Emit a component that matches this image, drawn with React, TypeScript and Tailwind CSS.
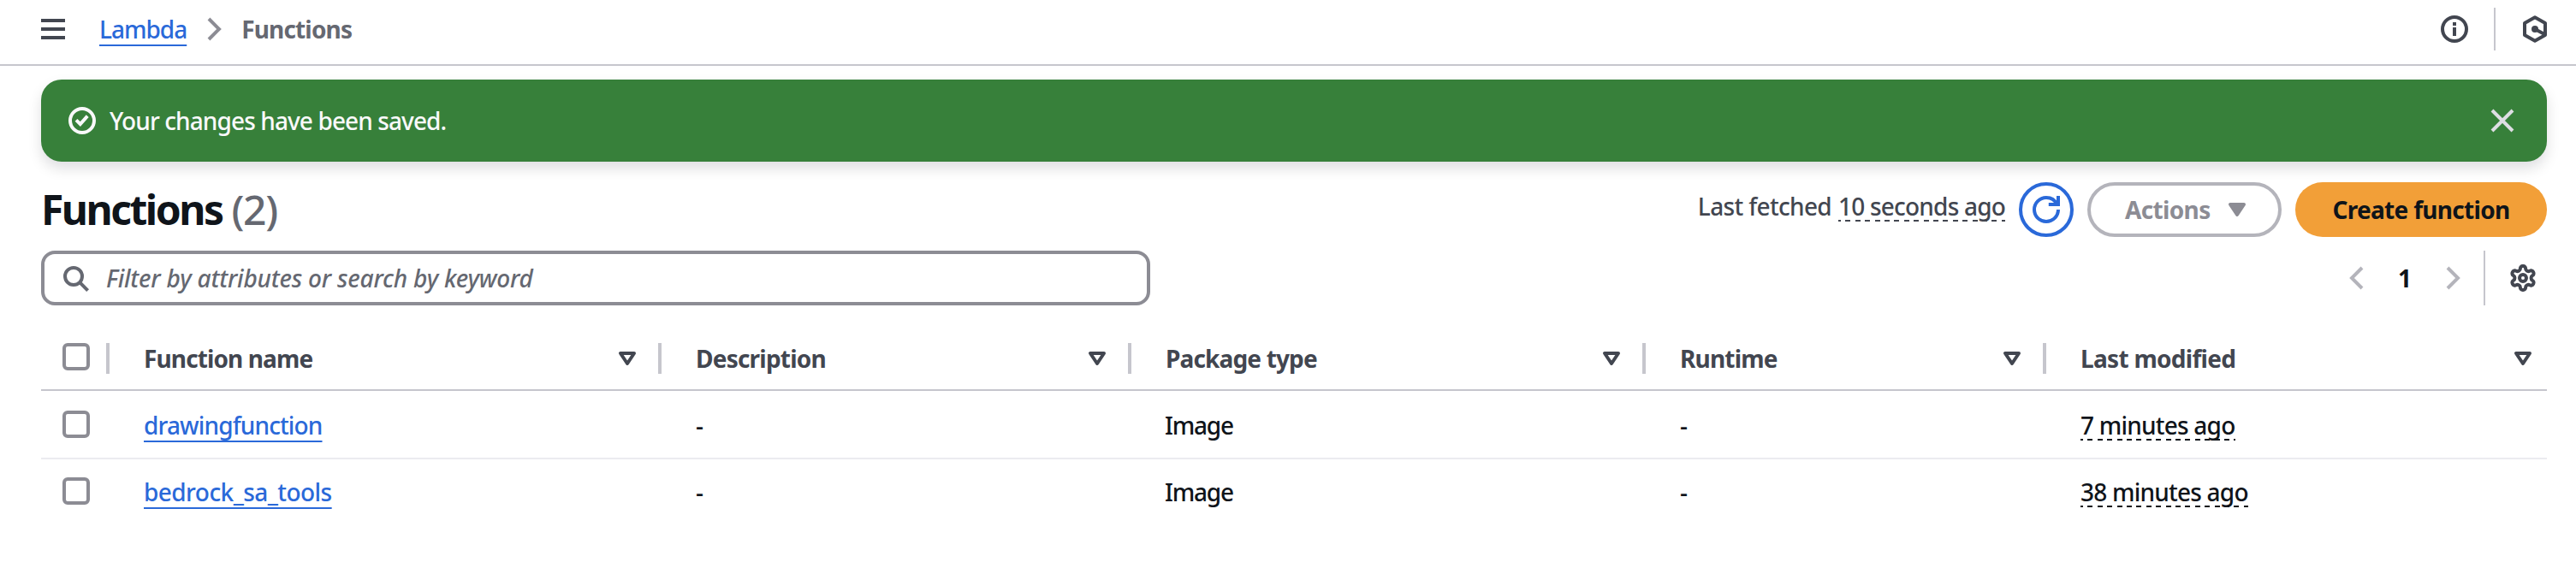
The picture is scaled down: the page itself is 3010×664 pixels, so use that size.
import type { ReactNode } from "react";

function Icon({ children, className = "" }: { children: ReactNode; className?: string }) {
  return (
    <svg
      viewBox="0 0 16 16"
      className={`size-8 shrink-0 ${className}`}
      fill="none"
      stroke="currentColor"
      strokeWidth={2}
      aria-hidden="true"
    >
      {children}
    </svg>
  );
}

const ChevronRight = ({ className }: { className?: string }) => (
  <Icon className={className}>
    <path d="M5 2l6 6-6 6" />
  </Icon>
);

const SortIcon = () => (
  <Icon className="text-[#424650]">
    <path d="M4 5h8l-4 6z" strokeLinejoin="round" />
  </Icon>
);

function GearIcon() {
  return (
    <svg
      viewBox="0.55 0.55 22.9 22.9"
      className="size-8 shrink-0 text-[#424650]"
      fill="none"
      stroke="currentColor"
      strokeWidth={2.86}
      aria-hidden="true"
    >
      <path d="M12.22 2h-.44a2 2 0 0 0-2 2v.18a2 2 0 0 1-1 1.73l-.43.25a2 2 0 0 1-2 0l-.15-.08a2 2 0 0 0-2.73.73l-.22.38a2 2 0 0 0 .73 2.73l.15.1a2 2 0 0 1 1 1.72v.51a2 2 0 0 1-1 1.74l-.15.09a2 2 0 0 0-.73 2.73l.22.38a2 2 0 0 0 2.73.73l.15-.08a2 2 0 0 1 2 0l.43.25a2 2 0 0 1 1 1.73V20a2 2 0 0 0 2 2h.44a2 2 0 0 0 2-2v-.18a2 2 0 0 1 1-1.73l.43-.25a2 2 0 0 1 2 0l.15.08a2 2 0 0 0 2.73-.73l.22-.39a2 2 0 0 0-.73-2.73l-.15-.08a2 2 0 0 1-1-1.74v-.5a2 2 0 0 1 1-1.74l.15-.09a2 2 0 0 0 .73-2.73l-.22-.38a2 2 0 0 0-2.73-.73l-.15.08a2 2 0 0 1-2 0l-.43-.25a2 2 0 0 1-1-1.73V4a2 2 0 0 0-2-2z" />
      <circle cx="12" cy="12" r="2.85" />
    </svg>
  );
}

const Checkbox = () => (
  <span
    role="checkbox"
    aria-checked="false"
    className="ml-[25px] block size-8 rounded-[6px] border-4 border-[#8c8c94] bg-white"
  />
);

const link =
  "text-[#2a69d9] underline decoration-2 underline-offset-[7px] [text-decoration-skip-ink:none]";

function Ago({ children, className = "" }: { children: ReactNode; className?: string }) {
  return (
    <span
      className={`inline-block bg-[repeating-linear-gradient(90deg,currentColor_0_3px,transparent_3px_8.4px,currentColor_8.4px_11.4px)] bg-[length:100%_2px] bg-[position:0_36px] bg-no-repeat ${className}`}
    >
      {children}
    </span>
  );
}

const grid = "grid grid-cols-[80px_645px_549px_601px_468px_585px] items-center";

const columns = [
  { label: "Function name", tracking: "tracking-[-0.88px]" },
  { label: "Description", tracking: "tracking-[-0.78px]" },
  { label: "Package type", tracking: "tracking-[-0.85px]" },
  { label: "Runtime", tracking: "tracking-[-0.8px]" },
  { label: "Last modified", tracking: "tracking-[-0.7px]" },
];

const rows = [
  {
    name: "drawingfunction",
    nameTracking: "tracking-[-0.87px]",
    modified: "7 minutes ago",
    className: "h-20 border-b-2 border-[#ebebf0]",
  },
  {
    name: "bedrock_sa_tools",
    nameTracking: "tracking-[-0.56px]",
    modified: "38 minutes ago",
    className: "h-[74px]",
  },
];

export default function App() {
  return (
    <div className="min-h-[664px] w-[3010px] bg-white font-['Noto_Sans','Open_Sans',sans-serif] text-[28px] leading-[40px] font-medium whitespace-nowrap text-[#0f141a]">
      <header className="flex h-[77px] items-center justify-between border-b-2 border-[#c6c6cd] pr-8 pb-[7px] pl-[46px]">
        <nav className="flex items-center">
          <Icon className="text-[#424650]">
            <path d="M1 3h14M1 8h14M1 13h14" />
          </Icon>
          <a className={`ml-[38px] tracking-[-1px] ${link}`}>Lambda</a>
          <ChevronRight className="ml-4 text-[#8c8c94]" />
          <span className="ml-4 font-bold tracking-[-0.85px] text-[#656871]">Functions</span>
        </nav>
        <div className="flex items-center gap-[30px] text-[#424650]">
          <Icon>
            <circle cx="8" cy="8" r="7" />
            <path d="M8 4v2M8 7v5" />
          </Icon>
          <span className="h-[50px] w-[2px] bg-[#c6c6cd]" />
          <Icon>
            <path d="M8 1.15l6 3.4v6.9l-6 3.4-6-3.4v-6.9z" strokeLinejoin="round" />
            <circle cx="8" cy="8" r="2" fill="currentColor" stroke="none" />
            <path d="M8 8l5.6 3" />
          </Icon>
        </div>
      </header>

      <main className="w-[2976px] pt-4 pl-12">
        <div className="flex h-24 items-center rounded-3xl bg-[#37803a] pr-9 pl-8 text-[#f9f9fa] shadow-[0_8px_16px_rgba(0,7,22,0.13)]">
          <Icon>
            <circle cx="8" cy="8" r="7" />
            <path d="M4.5 7.7l2.4 2.3 4.2-4.7" />
          </Icon>
          <span className="ml-4 grow tracking-[-0.9px]">Your changes have been saved.</span>
          <Icon className="text-[#dedee3]">
            <path d="M2 2l12 12M14 2L2 14" />
          </Icon>
        </div>

        <div className="mt-6 flex h-16 items-center">
          <h1 className="grow text-[48px] leading-[60px] font-bold tracking-[-2.5px]">
            Functions{" "}
            <span className="ml-[1px] font-medium tracking-[-1.4px] text-[#656871]">(2)</span>
          </h1>
          <div className="mr-4 pb-2 text-[#424650]">
            <span className="mr-[8px] tracking-[-0.66px]">Last fetched</span>
            <Ago className="tracking-[-0.8px]">10 seconds ago</Ago>
          </div>
          <button className="mr-4 flex size-16 items-center justify-center rounded-full border-4 border-[#2a69d9] text-[#2a69d9]">
            <Icon>
              <path d="M15 8a7 7 0 1 1-7-7c2.9 0 5.2 1.6 6.2 4" />
              <path d="M9.4 5H15V0" />
            </Icon>
          </button>
          <button className="mr-4 flex h-16 w-[227px] items-center justify-between rounded-full border-4 border-[#b4b4bb] pr-8 pl-10 font-bold text-[#8c8c94]">
            <span className="tracking-[-0.65px]">Actions</span>
            <Icon>
              <path d="M4 5h8l-4 6z" fill="currentColor" strokeLinejoin="round" />
            </Icon>
          </button>
          <button className="h-16 w-[294px] rounded-full bg-[#f29f38] font-bold tracking-[-0.7px]">
            Create function
          </button>
        </div>

        <div className="mt-4 flex h-16 items-center justify-between">
          <div className="flex h-16 w-[1296px] items-center rounded-2xl border-4 border-[#8c8c94] pl-5 text-[#656871]">
            <Icon>
              <circle cx="7" cy="7" r="5" />
              <path d="M10.6 10.6l4.7 4.7" />
            </Icon>
            <span className="ml-5 tracking-[-0.2px] italic">
              Filter by attributes or search by keyword
            </span>
          </div>
          <div className="flex h-16 items-center pr-3">
            <ChevronRight className="rotate-180 text-[#b4b4bb]" />
            <span className="w-20 text-center font-bold">1</span>
            <ChevronRight className="text-[#b4b4bb]" />
            <span className="mr-7 ml-5 h-16 w-[2px] bg-[#c6c6cd]" />
            <GearIcon />
          </div>
        </div>

        <div className="mt-[26px]">
          <div className={`${grid} h-[74px] border-b-2 border-[#c6c6cd]`}>
            <div className="flex h-9 justify-between border-r-4 border-[#c6c6cd]">
              <Checkbox />
            </div>
            {columns.map((column, i) => {
              const last = i === columns.length - 1;
              return (
                <div
                  key={column.label}
                  className={`flex h-9 items-center justify-between pl-10 font-bold text-[#424650] ${
                    last ? "pr-3" : "border-r-4 border-[#c6c6cd] pr-5"
                  }`}
                >
                  <span className={column.tracking}>{column.label}</span>
                  <SortIcon />
                </div>
              );
            })}
          </div>
          {rows.map((row) => (
            <div key={row.name} className={`${grid} ${row.className}`}>
              <Checkbox />
              <div className="pt-[2px] pl-10">
                <a className={`${link} ${row.nameTracking}`}>{row.name}</a>
              </div>
              <div className="pt-[2px] pl-10">-</div>
              <div className="pt-[2px] pl-[39px] tracking-[-1.2px]">Image</div>
              <div className="pt-[2px] pl-10">-</div>
              <div className="flex pt-[2px] pl-10">
                <Ago className="tracking-[-0.78px]">{row.modified}</Ago>
              </div>
            </div>
          ))}
        </div>
      </main>
    </div>
  );
}
